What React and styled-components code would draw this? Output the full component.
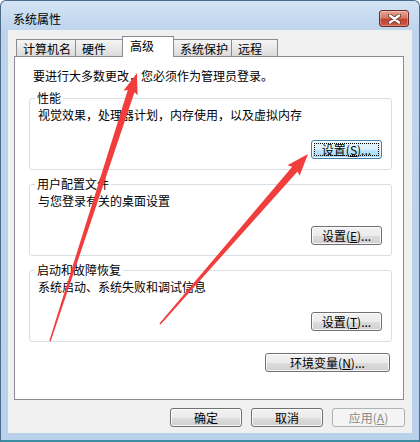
import React from "react";
import styled, { createGlobalStyle } from "styled-components";

const GlobalStyle = createGlobalStyle`
  html, body {
    margin: 0;
    padding: 0;
    background: #ffffff;
  }
  body {
    font-family: "Noto Sans CJK SC", "Liberation Sans", sans-serif;
    font-size: 12px;
    color: #000;
  }
  * {
    box-sizing: border-box;
  }
`;

// Window frame
const Window = styled.div`
  position: relative;
  width: 420px;
  height: 442px;
  display: flex;
  flex-direction: column;
  background: linear-gradient(#d3e3f4 0px, #bed4ec 30px, #b9d1ea 100%);
  border: 1px solid #4b6a8c;
  border-bottom: 2px solid #3b8ea2;
  border-radius: 6px 6px 0 0;
  padding: 0 7px 7px;
`;

const TitleBar = styled.div`
  height: 29px;
  display: flex;
  align-items: center;
  justify-content: space-between;
  padding: 9px 3px 3px 5px;
`;

const Title = styled.span`
  font-size: 12px;
  line-height: 15px;
  color: #000;
`;

const CloseButton = styled.div`
  width: 30px;
  height: 17px;
  border: 1px solid #6c2a23;
  border-radius: 3px;
  display: flex;
  align-items: center;
  justify-content: center;
  background: linear-gradient(#e6a595 0%, #d47a66 45%, #c04430 55%, #cc5a45 100%);
  box-shadow: inset 0 0 0 1px rgba(255, 255, 255, 0.3);
`;

const Client = styled.div`
  flex: 1;
  display: flex;
  flex-direction: column;
  background: #f0f0f0;
  padding: 6px 8px 6px 6px;
`;

// Tabs
const TabStrip = styled.div`
  height: 20px;
  display: flex;
  align-items: flex-end;
  padding-left: 2px;
`;

const Tab = styled.div`
  position: relative;
  z-index: ${(p) => (p.active ? 2 : 1)};
  width: ${(p) => p.width}px;
  height: ${(p) => (p.active ? 21 : 17)}px;
  margin-left: ${(p) => (p.first ? 0 : -1)}px;
  margin-bottom: ${(p) => (p.active ? -1 : 0)}px;
  display: flex;
  align-items: center;
  padding: ${(p) => (p.active ? "0 0 3px 7px" : "0 0 0 6px")};
  border: 1px solid #898c95;
  border-bottom: ${(p) => (p.active ? "none" : "0")};
  background: ${(p) =>
    p.active ? "#ffffff" : "linear-gradient(#f5f5f5 0%, #e8e8e8 50%, #dadada 100%)"};
  line-height: 15px;
  white-space: nowrap;
`;

const Panel = styled.div`
  height: 344px;
  display: flex;
  flex-direction: column;
  background: #ffffff;
  border: 1px solid #898c95;
  padding: 11px 11px 0 14px;
`;

const Intro = styled.div`
  line-height: 15px;
  margin: 0 0 8px 4px;
`;

// Group boxes
const Group = styled.fieldset`
  height: 79px;
  margin: ${(p) => (p.first ? 0 : 7)}px 0 0;
  min-width: 0;
  border: 1px solid #d5dfe5;
  border-radius: 3px;
  padding: 2px 9px 10px 8px;
`;

const Legend = styled.legend`
  padding: 0 2px;
  margin-left: -3px;
  line-height: 14px;
  font-size: 12px;
`;

const Description = styled.div`
  line-height: 15px;
`;

// Buttons
const Button = styled.button`
  width: ${(p) => p.width}px;
  height: 19px;
  padding: 0;
  display: inline-flex;
  align-items: center;
  justify-content: center;
  font-family: "Noto Sans CJK SC", "Liberation Sans", sans-serif;
  font-size: 12px;
  line-height: 15px;
  color: ${(p) => (p.disabled ? "#8a8a8a" : "#000")};
  border: 1px solid
    ${(p) => (p.focused ? "#3c7fb1" : p.disabled ? "#adb2b5" : "#707070")};
  border-radius: 3px;
  background: ${(p) =>
    p.disabled
      ? "#f4f4f4"
      : p.focused
      ? "linear-gradient(#eaf6fd 0%, #d9f0fc 50%, #bee6fd 51%, #a7d9f5 100%)"
      : "linear-gradient(#f2f2f2 0%, #ebebeb 50%, #dddddd 51%, #cfcfcf 100%)"};
  box-shadow: inset 0 0 0 1px
    ${(p) => (p.disabled ? "transparent" : "rgba(255, 255, 255, 0.8)")};
  outline: ${(p) => (p.focused ? "1px dotted #000" : "none")};
  outline-offset: -4px;
  white-space: nowrap;

  u {
    text-decoration: underline;
    text-underline-offset: 1px;
  }
`;

const GroupActions = styled.div`
  margin-top: 18px;
  display: flex;
  justify-content: flex-end;
`;

const EnvRow = styled.div`
  display: flex;
  justify-content: flex-end;
  margin: 11px 2px 0 0;
`;

const DialogButtons = styled.div`
  display: flex;
  justify-content: flex-end;
  gap: 9px;
  margin: 8px -1px 0 0;
`;

// Annotation arrows drawn over the dialog
const Overlay = styled.svg`
  position: absolute;
  left: -1px;
  top: -1px;
  width: 420px;
  height: 442px;
  pointer-events: none;
`;

const arrowPoints = (tx, ty, px, py, tailW, neckW, headLen, headW) => {
  const dx = px - tx;
  const dy = py - ty;
  const len = Math.hypot(dx, dy);
  const ux = dx / len;
  const uy = dy / len;
  const nx = -uy;
  const ny = ux;
  const bx = px - ux * headLen;
  const by = py - uy * headLen;
  const pts = [
    [tx + (nx * tailW) / 2, ty + (ny * tailW) / 2],
    [bx + (nx * neckW) / 2, by + (ny * neckW) / 2],
    [bx + (nx * headW) / 2 - ux * 2, by + (ny * headW) / 2 - uy * 2],
    [px, py],
    [bx - (nx * headW) / 2 - ux * 2, by - (ny * headW) / 2 - uy * 2],
    [bx - (nx * neckW) / 2, by - (ny * neckW) / 2],
    [tx - (nx * tailW) / 2, ty - (ny * tailW) / 2],
  ];
  return pts.map((p) => p.map((v) => v.toFixed(1)).join(",")).join(" ");
};

const CloseIcon = () => (
  <svg width="13" height="10" viewBox="0 0 13 10">
    <path d="M2 1.5 L11 8.5 M11 1.5 L2 8.5" stroke="#6a2c26" strokeWidth="4" strokeLinecap="round" />
    <path d="M2 1.5 L11 8.5 M11 1.5 L2 8.5" stroke="#ffffff" strokeWidth="2.4" strokeLinecap="round" />
  </svg>
);

const tabs = [
  { label: "计算机名", width: 60 },
  { label: "硬件", width: 48 },
  { label: "高级", width: 52, active: true },
  { label: "系统保护", width: 59 },
  { label: "远程", width: 47 },
];

const groups = [
  {
    title: "性能",
    text: "视觉效果，处理器计划，内存使用，以及虚拟内存",
    key: "S",
    focused: true,
  },
  { title: "用户配置文件", text: "与您登录有关的桌面设置", key: "E" },
  { title: "启动和故障恢复", text: "系统启动、系统失败和调试信息", key: "T" },
];

const App = () => (
  <>
    <GlobalStyle />
    <Window>
      <TitleBar>
        <Title>系统属性</Title>
        <CloseButton>
          <CloseIcon />
        </CloseButton>
      </TitleBar>
      <Client>
        <TabStrip>
          {tabs.map((t, i) => (
            <Tab key={t.label} width={t.width} active={t.active} first={i === 0}>
              {t.label}
            </Tab>
          ))}
        </TabStrip>
        <Panel>
          <Intro>要进行大多数更改，您必须作为管理员登录。</Intro>
          {groups.map((g, i) => (
            <Group key={g.title} first={i === 0}>
              <Legend>{g.title}</Legend>
              <Description>{g.text}</Description>
              <GroupActions>
                <Button width={71} focused={g.focused}>
                  设置(<u>{g.key}</u>)...
                </Button>
              </GroupActions>
            </Group>
          ))}
          <EnvRow>
            <Button width={125}>
              环境变量(<u>N</u>)...
            </Button>
          </EnvRow>
        </Panel>
        <DialogButtons>
          <Button width={72}>确定</Button>
          <Button width={72}>取消</Button>
          <Button width={73} disabled>
            应用(<u>A</u>)
          </Button>
        </DialogButtons>
      </Client>
      <Overlay viewBox="0 0 420 442">
        <polygon points={arrowPoints(50, 341, 137, 73, 1.5, 7, 19, 15)} fill="#f23d3d" />
        <polygon points={arrowPoints(160, 324, 308, 154, 1.5, 7, 20, 16)} fill="#f23d3d" />
      </Overlay>
    </Window>
  </>
);

export default App;
